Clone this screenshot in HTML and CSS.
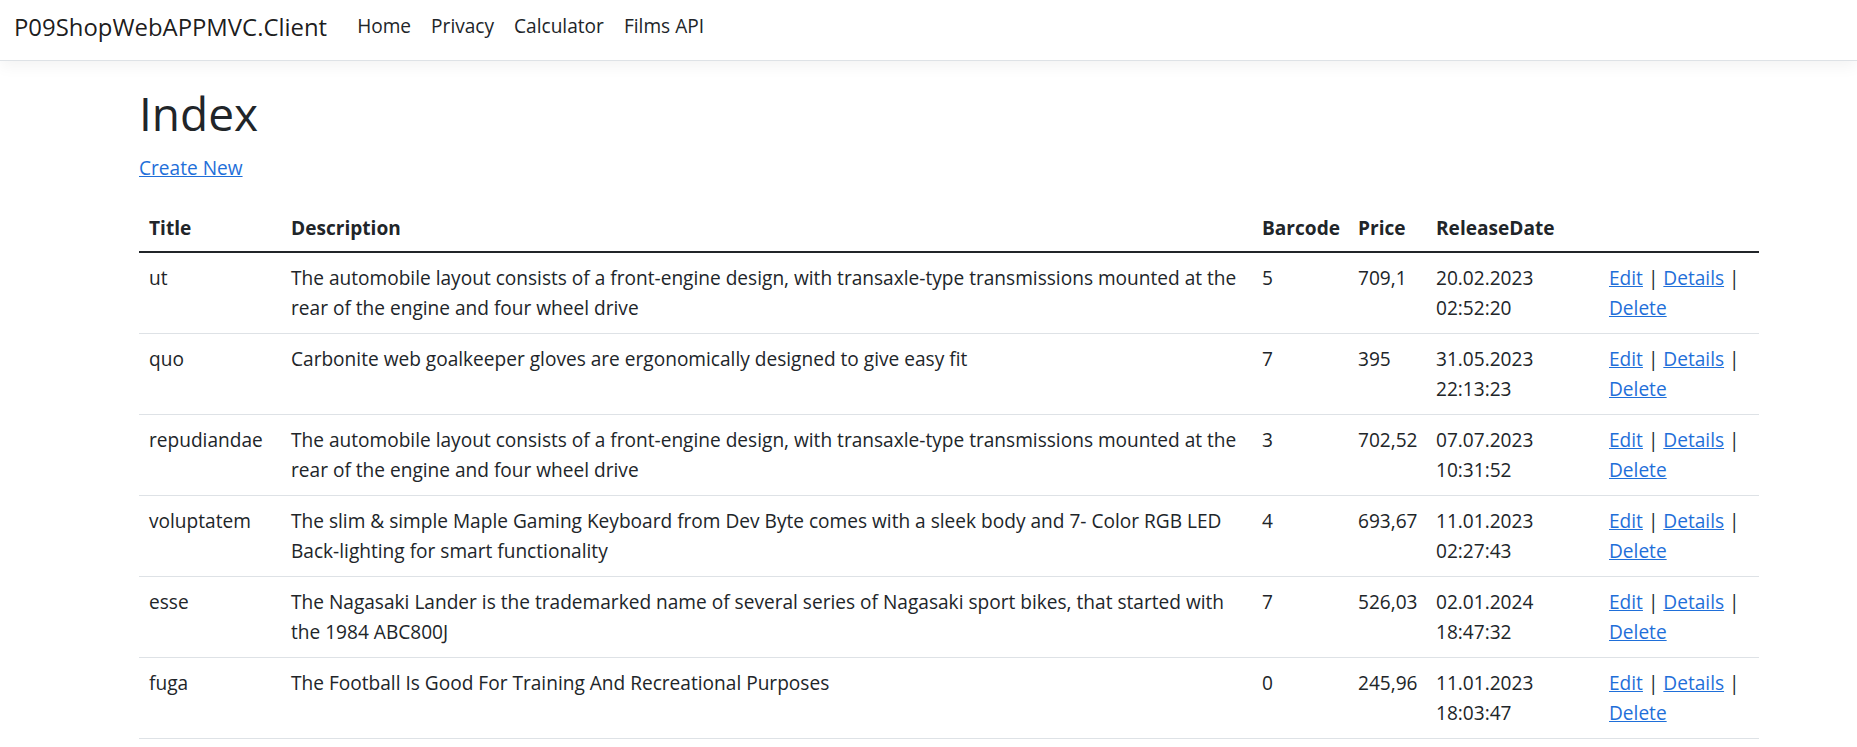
FILE: index.html
```html
<!DOCTYPE html>
<html lang="en">
<head>
<meta charset="utf-8">
<title>Index - P09ShopWebAPPMVC.Client</title>
<link rel="stylesheet" href="styles.css">
</head>
<body>
<header class="site-header">
  <nav class="navbar">
    <a class="brand" href="#">P09ShopWebAPPMVC.Client</a>
    <ul class="nav">
      <li><a class="nav-link" href="#">Home</a></li>
      <li><a class="nav-link" href="#">Privacy</a></li>
      <li><a class="nav-link" href="#">Calculator</a></li>
      <li><a class="nav-link" href="#">Films API</a></li>
    </ul>
  </nav>
</header>
<main class="container">
  <h1 class="title">Index</h1>
  <p class="create"><a href="#">Create New</a></p>
  <table class="table">
    <colgroup>
      <col class="c-title"><col class="c-desc"><col class="c-bar"><col class="c-price"><col class="c-date"><col class="c-act">
    </colgroup>
    <thead>
      <tr><th>Title</th><th>Description</th><th>Barcode</th><th>Price</th><th>ReleaseDate</th><th></th></tr>
    </thead>
    <tbody>
      <tr>
        <td>ut</td>
        <td>The automobile layout consists of a front-engine design, with transaxle-type transmissions mounted at the rear of the engine and four wheel drive</td>
        <td>5</td><td>709,1</td><td>20.02.2023 02:52:20</td>
        <td><a href="#">Edit</a> | <a href="#">Details</a> | <a href="#">Delete</a></td>
      </tr>
      <tr>
        <td>quo</td>
        <td>Carbonite web goalkeeper gloves are ergonomically designed to give easy fit</td>
        <td>7</td><td>395</td><td>31.05.2023 22:13:23</td>
        <td><a href="#">Edit</a> | <a href="#">Details</a> | <a href="#">Delete</a></td>
      </tr>
      <tr>
        <td>repudiandae</td>
        <td>The automobile layout consists of a front-engine design, with transaxle-type transmissions mounted at the rear of the engine and four wheel drive</td>
        <td>3</td><td>702,52</td><td>07.07.2023 10:31:52</td>
        <td><a href="#">Edit</a> | <a href="#">Details</a> | <a href="#">Delete</a></td>
      </tr>
      <tr>
        <td>voluptatem</td>
        <td>The slim &amp; simple Maple Gaming Keyboard from Dev Byte comes with a sleek body and 7- Color RGB LED Back-lighting for smart functionality</td>
        <td>4</td><td>693,67</td><td>11.01.2023 02:27:43</td>
        <td><a href="#">Edit</a> | <a href="#">Details</a> | <a href="#">Delete</a></td>
      </tr>
      <tr>
        <td>esse</td>
        <td>The Nagasaki Lander is the trademarked name of several series of Nagasaki sport bikes, that started with the 1984 ABC800J</td>
        <td>7</td><td>526,03</td><td>02.01.2024 18:47:32</td>
        <td><a href="#">Edit</a> | <a href="#">Details</a> | <a href="#">Delete</a></td>
      </tr>
      <tr>
        <td>fuga</td>
        <td>The Football Is Good For Training And Recreational Purposes</td>
        <td>0</td><td>245,96</td><td>11.01.2023 18:03:47</td>
        <td><a href="#">Edit</a> | <a href="#">Details</a> | <a href="#">Delete</a></td>
      </tr>
    </tbody>
  </table>
</main>
</body>
</html>
```
FILE: styles.css
```css
html, body {
  margin: 0;
  padding: 0;
  background: #fff;
}
body {
  font-family: "Open Sans", "Noto Sans", sans-serif;
  font-size: 19.1px;
  line-height: 30px;
  color: #212529;
  overflow: hidden;
}
a {
  color: #1f6fd9;
}
.site-header {
  border-bottom: 1px solid #dee2e6;
  box-shadow: 0 5px 15px rgba(0, 0, 0, 0.05);
  margin-bottom: 20px;
}
.navbar {
  display: flex;
  align-items: center;
  height: 50px;
  padding: 1px 15px 9px 14px;
}
.brand {
  font-size: 23.9px;
  line-height: 37px;
  padding: 6px 0;
  margin-right: 20px;
  color: rgba(0, 0, 0, 0.9);
  text-decoration: none;
}
.nav {
  display: flex;
  list-style: none;
  margin: 0;
  padding: 0;
}
.nav-link {
  display: block;
  padding: 10px 10px;
  color: #212529;
  text-decoration: none;
}
.container {
  width: 1620px;
  margin-left: 124px;
  padding: 2px 15px 0;
}
.title {
  margin: 0 0 10px;
  font-size: 46px;
  font-weight: 500;
  line-height: 60px;
}
.create {
  margin: 0 0 20px;
}
.table {
  width: 100%;
  table-layout: fixed;
  border-collapse: collapse;
  color: #212529;
}
.c-title { width: 142px; }
.c-desc { width: 971px; }
.c-bar { width: 96px; }
.c-price { width: 78px; }
.c-date { width: 173px; }
.c-act { width: 160px; }
.table th,
.table td {
  padding: 10px;
  text-align: left;
  vertical-align: top;
  border-bottom: 1px solid #dee2e6;
}
.table th {
  font-weight: 700;
  vertical-align: bottom;
  padding-bottom: 8px;
  border-bottom: 1px solid #dee2e6;
}
.table tbody {
  border-top: 2px solid #212529;
}
```
